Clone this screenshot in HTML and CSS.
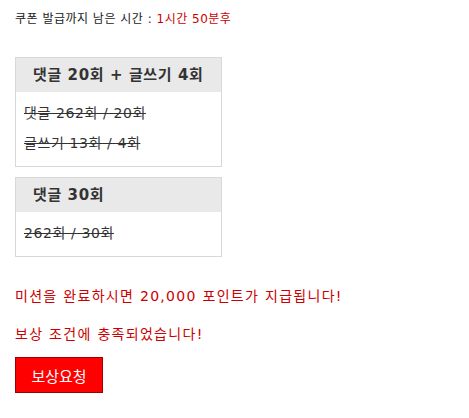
FILE: index.html
```html
<!DOCTYPE html>
<html lang="ko">
<head>
    <meta charset="UTF-8">
    <title>미션 쿠폰</title>
    <link rel="stylesheet" href="styles.css">
</head>
<body>
    <div class="wrap">
        <p class="timer">쿠폰 발급까지 남은 시간 : <span class="red">1시간 50분후</span></p>

        <div class="mission">
            <div class="mission-title">댓글 20회 + 글쓰기 4회</div>
            <div class="mission-body">
                <p class="done">댓글 262회 / 20회</p>
                <p class="done">글쓰기 13회 / 4회</p>
            </div>
        </div>

        <div class="mission">
            <div class="mission-title">댓글 30회</div>
            <div class="mission-body">
                <p class="done">262회 / 30회</p>
            </div>
        </div>

        <p class="notice">미션을 완료하시면 20,000 포인트가 지급됩니다!</p>
        <p class="notice">보상 조건에 충족되었습니다!</p>

        <button class="reward-btn" type="button">보상요청</button>
    </div>
</body>
</html>
```

FILE: styles.css
```css
body {
    margin: 0;
    padding: 0;
    background-color: #fff;
    font-family: "DejaVu Sans", "Noto Sans CJK KR", sans-serif;
    color: #333;
}

.wrap {
    padding: 10px 15px;
}

p {
    margin: 0;
}

.timer {
    font-size: 12px;
    line-height: 18px;
    letter-spacing: 0.5px;
    color: #222;
}

.red {
    color: #cc0000;
}

.mission {
    width: 205px;
    border: 1px solid #d8d8d8;
    margin-top: 10px;
}

.timer + .mission {
    margin-top: 29px;
}

.mission-title {
    background-color: #e9e9e9;
    height: 34px;
    line-height: 34px;
    padding-left: 17px;
    font-size: 15px;
    font-weight: bold;
    letter-spacing: 0.6px;
    color: #333;
}

.mission-body {
    padding: 6px 8px 8px;
}

.done {
    font-size: 14px;
    line-height: 30px;
    letter-spacing: 0.6px;
    color: #333;
    text-decoration: line-through;
}

.notice {
    font-size: 14px;
    line-height: 20px;
    letter-spacing: 1.3px;
    color: #cc0000;
    margin-top: 18px;
}

.mission + .notice {
    margin-top: 29px;
}

.reward-btn {
    display: block;
    margin-top: 13px;
    width: 88px;
    height: 36px;
    background-color: #ff0000;
    border: 1px solid #a00000;
    color: #fff;
    font-family: "Noto Sans CJK KR", sans-serif;
    font-size: 15px;
    padding: 0;
    cursor: pointer;
}
```
